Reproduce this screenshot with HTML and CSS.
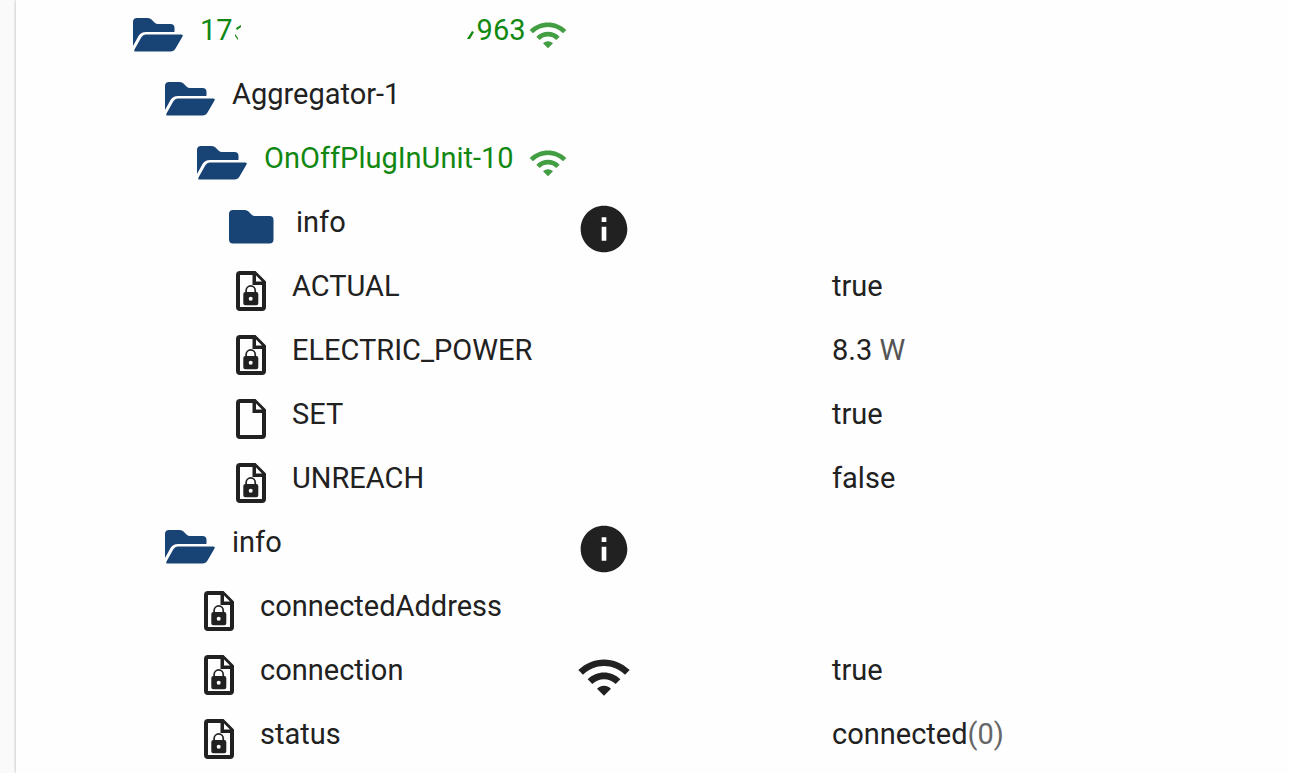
FILE: index.html
```
<!DOCTYPE html>
<html lang="en">
<head>
    <meta charset="UTF-8">
    <meta name="viewport" content="width=device-width, initial-scale=1.0">
    <title>Objects</title>
    <link rel="stylesheet" href="styles.css">
</head>
<body>
    <!-- icon set -->
    <svg class="sprite" aria-hidden="true">
        <symbol id="folder-open" viewBox="0 0 52 36">
            <path d="M1 29V5Q1 1 5 1H16Q18 1 19.500 2.500L22.500 5.500Q24 7 26 7H38.500Q42.500 7 42.500 11V15H14Q9 15 6.500 19L1 29Z"/>
            <path d="M13.500 17.500H49Q51.500 17.500 50.500 19.500L43.500 31.500Q42 34.500 38.500 34.500H3.500Q1.500 34.500 2.500 32.500L9.500 20Q11 17.500 13.500 17.500Z"/>
        </symbol>
        <symbol id="folder" viewBox="0 0 52 36">
            <path d="M5 1H17Q19 1 20.500 2.500L24 6Q25 7 27 7H41.500Q45.500 7 45.500 11V30.500Q45.500 34.500 41.500 34.500H5Q1 34.500 1 30.500V5Q1 1 5 1Z"/>
        </symbol>
        <symbol id="file" viewBox="0 0 30 40">
            <path fill-rule="evenodd" d="M4 0H19.500L30 10.500V36Q30 40 26 40H4Q0 40 0 36V4Q0 0 4 0ZM4 4V36H26V14H16.500V4ZM20 4.500V10.500H26Z"/>
        </symbol>
        <symbol id="file-lock" viewBox="0 0 30 40">
            <path fill-rule="evenodd" d="M4 0H19.500L30 10.500V36Q30 40 26 40H4Q0 40 0 36V4Q0 0 4 0ZM4 4V36H26V14H16.500V4ZM20 4.500V10.500H26Z"/>
            <path fill-rule="evenodd" d="M9.300 21V19.500A5.400 5.400 0 0 1 20.100 19.500V21H20.300Q22.300 21 22.300 23V32.200Q22.300 34.200 20.300 34.200H9.300Q7.300 34.200 7.300 32.200V23Q7.300 21 9.300 21ZM11 21H18.400V19.500A3.700 3.700 0 0 0 11 19.500ZM14.700 25.700A2 2 0 1 0 14.700 29.700A2 2 0 1 0 14.700 25.700Z"/>
        </symbol>
        <symbol id="wifi" viewBox="0 0 24 24">
            <path d="M1 9l2 2c4.970-4.970 13.030-4.970 18 0l2-2C16.930 2.930 7.080 2.930 1 9zm8 8l3 3 3-3c-1.650-1.660-4.340-1.660-6 0zm-4-4l2 2c2.760-2.760 7.240-2.760 10 0l2-2C15.140 9.140 8.870 9.140 5 13z"/>
        </symbol>
        <symbol id="info" viewBox="0 0 24 24">
            <path d="M12 2C6.480 2 2 6.480 2 12s4.480 10 10 10 10-4.480 10-10S17.520 2 12 2zm1 15h-2v-6h2v6zm0-8h-2V7h2v2z"/>
        </symbol>
    </svg>

    <main class="panel">
        <ul class="tree">
            <li class="row">
                <div class="name depth-0">
                    <svg class="folder-icon"><use href="#folder-open"/></svg>
                    <span class="label online masked">17<svg class="mask" viewBox="0 0 244 28">
                        <path d="M3 12l5-3v2l-4 3zM2 18l3 4v2l-3-4zM239 15l2 1-4 7h-3z"/>
                    </svg>963</span>
                    <svg class="signal"><use href="#wifi"/></svg>
                </div>
            </li>
            <li class="row">
                <div class="name depth-1">
                    <svg class="folder-icon"><use href="#folder-open"/></svg>
                    <span class="label">Aggregator-1</span>
                </div>
            </li>
            <li class="row">
                <div class="name depth-2">
                    <svg class="folder-icon"><use href="#folder-open"/></svg>
                    <span class="label online">OnOffPlugInUnit-10</span>
                    <svg class="signal"><use href="#wifi"/></svg>
                </div>
            </li>
            <li class="row">
                <div class="name depth-3">
                    <svg class="folder-icon"><use href="#folder"/></svg>
                    <span class="label">info</span>
                </div>
                <svg class="type-icon"><use href="#info"/></svg>
            </li>
            <li class="row">
                <div class="name depth-3">
                    <svg class="file-icon"><use href="#file-lock"/></svg>
                    <span class="label">ACTUAL</span>
                </div>
                <span class="value">true</span>
            </li>
            <li class="row">
                <div class="name depth-3">
                    <svg class="file-icon"><use href="#file-lock"/></svg>
                    <span class="label">ELECTRIC_POWER</span>
                </div>
                <span class="value">8.3 <span class="unit">W</span></span>
            </li>
            <li class="row">
                <div class="name depth-3">
                    <svg class="file-icon"><use href="#file"/></svg>
                    <span class="label">SET</span>
                </div>
                <span class="value">true</span>
            </li>
            <li class="row">
                <div class="name depth-3">
                    <svg class="file-icon"><use href="#file-lock"/></svg>
                    <span class="label">UNREACH</span>
                </div>
                <span class="value">false</span>
            </li>
            <li class="row">
                <div class="name depth-1">
                    <svg class="folder-icon"><use href="#folder-open"/></svg>
                    <span class="label">info</span>
                </div>
                <svg class="type-icon"><use href="#info"/></svg>
            </li>
            <li class="row">
                <div class="name depth-2">
                    <svg class="file-icon"><use href="#file-lock"/></svg>
                    <span class="label">connectedAddress</span>
                </div>
            </li>
            <li class="row">
                <div class="name depth-2">
                    <svg class="file-icon"><use href="#file-lock"/></svg>
                    <span class="label">connection</span>
                </div>
                <svg class="type-icon"><use href="#wifi"/></svg>
                <span class="value">true</span>
            </li>
            <li class="row">
                <div class="name depth-2">
                    <svg class="file-icon"><use href="#file-lock"/></svg>
                    <span class="label">status</span>
                </div>
                <span class="value">connected<span class="raw">(0)</span></span>
            </li>
        </ul>
    </main>
</body>
</html>
```
FILE: styles.css
```
* { box-sizing: border-box; }

body {
  margin: 0;
  background: #fafafa;
  color: #212121;
  font-family: Roboto, sans-serif;
  font-size: 29px;
  line-height: 32px;
}

svg {
  flex: none;
  fill: currentColor;
}

.sprite {
  display: none;
}

.panel {
  min-height: 100vh;
  margin-left: 16px;
  background: #fefefe;
  box-shadow: 0 0 3px rgba(0, 0, 0, 0.3);
}

.tree {
  margin: 0;
  padding: 0 0 0 116px;
  list-style: none;
}

.row {
  display: grid;
  grid-template-columns: 436px 264px 1fr;
  grid-template-rows: 58px;
  align-items: center;
  padding-top: 6px;
}

.name {
  display: flex;
  align-items: center;
}

.depth-1 { padding-left: 32px; }
.depth-2 { padding-left: 64px; }
.depth-3 { padding-left: 96px; }

.folder-icon {
  width: 52px;
  height: 36px;
  margin-right: 16px;
  color: #174475;
}

.file-icon {
  width: 30px;
  height: 40px;
  margin: 0 26px 0 8px;
}

/* text sits a little above the icons */
.label,
.value {
  padding-bottom: 10px;
  white-space: nowrap;
}

.online { color: #118811; }

.masked {
  display: flex;
  align-items: center;
}

.mask {
  width: 244px;
  height: 28px;
}

.signal {
  width: 40px;
  height: 40px;
  margin-left: auto;
  color: #439d43;
}

.type-icon {
  grid-column: 2;
  width: 56px;
  height: 56px;
  margin: 4px 8px 0;
}

.value { grid-column: 3; }

.unit { color: #555; }

.raw { color: #666; }
```
